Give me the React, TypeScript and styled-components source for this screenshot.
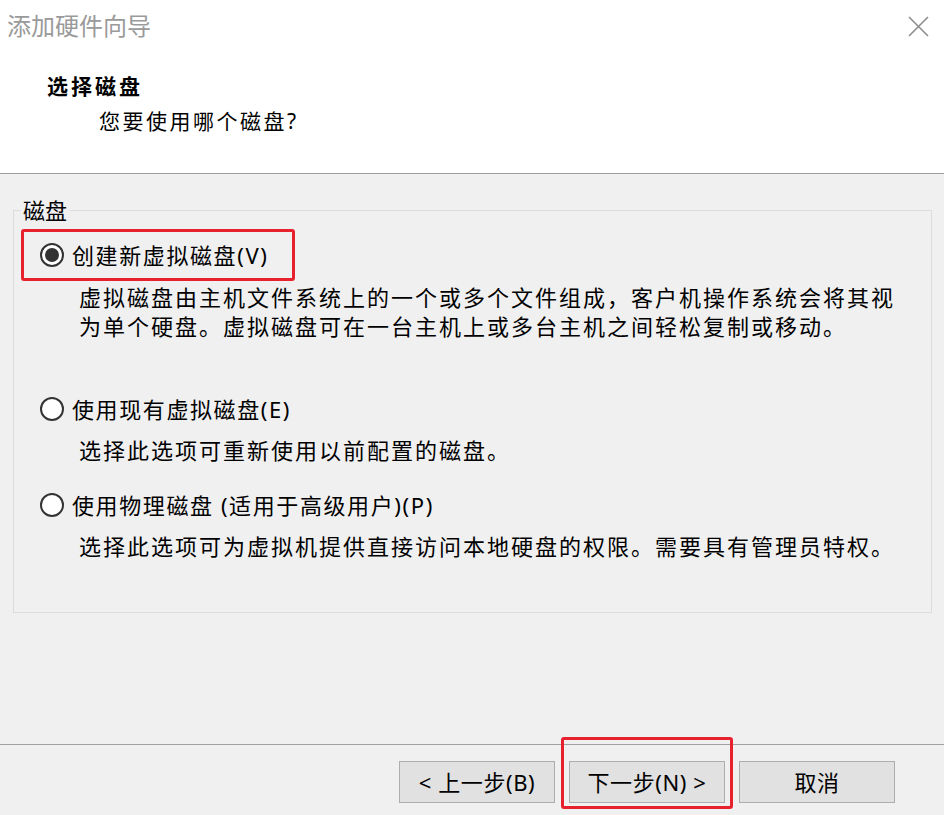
import React from 'react';
import styled, { createGlobalStyle, css } from 'styled-components';

const GlobalStyle = createGlobalStyle`
html, body {
margin: 0;
padding: 0;
background: #f0f0f0;
}
body {
font-family: "Noto Sans", "Noto Sans CJK SC", sans-serif;
color: #000;
}
`

const Window = styled.div`
width: 944px;
height: 815px;
display: flex;
flex-direction: column;
background: #f0f0f0;
overflow: hidden;
`

const Header = styled.header`
height: 174px;
box-sizing: border-box;
background: #fff;
border-bottom: 1px solid #a0a0a0;
`

const TitleBar = styled.div`
height: 52px;
display: flex;
align-items: center;
justify-content: space-between;
padding: 0 15px 0 7px;
`

const WindowTitle = styled.div`
font-size: 24px;
line-height: 28px;
color: #9a9a9a;
`

const CloseButton = styled.button`
width: 22px;
height: 22px;
padding: 0;
border: 0;
background: transparent;
display: flex;
align-items: center;
justify-content: center;
`

const Heading = styled.h2`
margin: 20px 0 0 47px;
font-size: 21px;
font-weight: 700;
line-height: 28px;
letter-spacing: 3px;
`

const SubHeading = styled.p`
margin: 7px 0 0 99px;
font-size: 21px;
line-height: 28px;
letter-spacing: 2.5px;
`

const Body = styled.main`
flex: 1;
padding-top: 24px;
`

const GroupBox = styled.fieldset`
margin: 0 12px 0 13px;
padding: 0 0 51px 0;
min-width: 0;
border: 1px solid #dcdcdc;
`

const GroupLabel = styled.legend`
margin-left: 7px;
padding: 0 2px;
font-size: 22px;
line-height: 24px;
`

const OptionRow = styled.label<{ $marked?: boolean; $gap: number }>`
margin: ${p => p.$gap}px 0 0 7px;
width: fit-content;
height: 52px;
box-sizing: border-box;
display: flex;
align-items: center;
gap: 8px;
padding: 0 24px 0 16px;
border: 3px solid ${p => (p.$marked ? '#e8212e' : 'transparent')};
border-radius: 3px;
font-size: 22px;
line-height: 28px;
letter-spacing: 1.6px;
`

const RadioCircle = styled.span<{ $checked?: boolean }>`
width: 24px;
height: 24px;
box-sizing: border-box;
border: 2px solid #333;
border-radius: 50%;
background: #fff;
display: flex;
align-items: center;
justify-content: center;
&::after {
content: '';
width: 14px;
height: 14px;
border-radius: 50%;
background: ${p => (p.$checked ? '#333' : 'transparent')};
}
`

const Description = styled.p<{ $gap: number }>`
margin: ${p => p.$gap}px 0 0 65px;
max-width: 830px;
font-size: 22px;
line-height: 29px;
letter-spacing: 2px;
`

const Footer = styled.footer`
height: 71px;
box-sizing: border-box;
border-top: 1px solid #a0a0a0;
display: flex;
justify-content: flex-end;
align-items: flex-start;
gap: 14px;
padding: 16px 49px 0 0;
`

const Button = styled.button<{ $marked?: boolean }>`
position: relative;
width: 156px;
height: 42px;
box-sizing: border-box;
border: 1px solid #adadad;
background: #e1e1e1;
font-family: "Noto Sans", "Noto Sans CJK SC", sans-serif;
font-size: 22px;
line-height: 28px;
letter-spacing: 0.6px;
color: #000;
padding: 0;
${p => p.$marked && css`
&::after {
content: '';
position: absolute;
top: -25px;
left: -9px;
right: -9px;
bottom: -7px;
border: 3px solid #e8212e;
border-radius: 3px;
pointer-events: none;
}
`}
`

const CloseIcon = () => (
  <svg width="21" height="21" viewBox="0 0 21 21">
    <path d="M1 1 L20 20 M20 1 L1 20" stroke="#8c8c8c" strokeWidth="1.6" fill="none" />
  </svg>
)

const options = [
  {
    label: '创建新虚拟磁盘(V)',
    desc: '虚拟磁盘由主机文件系统上的一个或多个文件组成，客户机操作系统会将其视为单个硬盘。虚拟磁盘可在一台主机上或多台主机之间轻松复制或移动。',
    checked: true,
    rowGap: 7,
  },
  {
    label: '使用现有虚拟磁盘(E)',
    desc: '选择此选项可重新使用以前配置的磁盘。',
    checked: false,
    rowGap: 42,
  },
  {
    label: '使用物理磁盘 (适用于高级用户)(P)',
    desc: '选择此选项可为虚拟机提供直接访问本地硬盘的权限。需要具有管理员特权。',
    checked: false,
    rowGap: 14,
  },
]

const App = () => {
  return (
    <Window>
      <GlobalStyle />
      <Header>
        <TitleBar>
          <WindowTitle>添加硬件向导</WindowTitle>
          <CloseButton aria-label="关闭"><CloseIcon /></CloseButton>
        </TitleBar>
        <Heading>选择磁盘</Heading>
        <SubHeading>您要使用哪个磁盘?</SubHeading>
      </Header>
      <Body>
        <GroupBox>
          <GroupLabel>磁盘</GroupLabel>
          {options.map((o, i) => (
            <React.Fragment key={i}>
              <OptionRow $marked={o.checked} $gap={o.rowGap}>
                <RadioCircle $checked={o.checked} />
                {o.label}
              </OptionRow>
              <Description $gap={i === 0 ? 2 : 1}>{o.desc}</Description>
            </React.Fragment>
          ))}
        </GroupBox>
      </Body>
      <Footer>
        <Button>&lt; 上一步(B)</Button>
        <Button $marked>下一步(N) &gt;</Button>
        <Button>取消</Button>
      </Footer>
    </Window>
  );
}

export default App;
